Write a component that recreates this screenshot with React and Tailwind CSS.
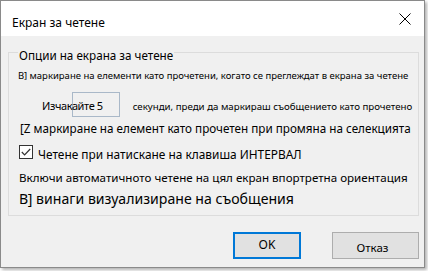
import React from 'react';

const font = { fontFamily: '"Noto Sans", "Open Sans", Arial, sans-serif' };

function CloseIcon() {
  return (
    <svg width="12" height="12" viewBox="0 0 12 12" className="block">
      <path d="M0.5 0.5 L11.5 11.5 M11.5 0.5 L0.5 11.5" stroke="#000" strokeWidth="1" fill="none" />
    </svg>
  );
}

function CheckBox() {
  return (
    <div className="w-[14px] h-[14px] border border-[#333] bg-white flex items-center justify-center shrink-0">
      <svg width="10" height="8" viewBox="0 0 10 8" className="block">
        <path d="M0.8 4 L3.6 6.8 L9.2 1" stroke="#333" strokeWidth="1.2" fill="none" />
      </svg>
    </div>
  );
}

export default function App() {
  return (
    <div className="w-[428px] h-[271px] bg-white overflow-hidden text-black" style={font}>
      {/* dialog window */}
      <div className="w-[425px] h-[268px] border border-[#8a8a8a] flex flex-col shadow-[2px_2px_3px_rgba(0,0,0,0.3)]">
        {/* title bar */}
        <div className="h-[35px] bg-white flex justify-between pl-[11px] pr-[13px] shrink-0">
          <span className="text-[12px] leading-[16px] mt-[14px] whitespace-nowrap">Екран за четене</span>
          <div className="mt-[12px]">
            <CloseIcon />
          </div>
        </div>

        {/* body */}
        <div className="flex-1 bg-[#f0f0f0] pt-[16px] pl-[7px]">
          <div className="relative w-[411px] h-[164px] border border-[#dcdcdc] flex flex-col">
            <span className="absolute left-[9px] top-[-5px] px-[1px] bg-[#f0f0f0] text-[11.7px] leading-[15px] whitespace-nowrap">
              Опции на екрана за четене
            </span>

            <div className="mt-[15px] pl-[9px] h-[16px] flex items-center text-[9.5px] leading-[16px] whitespace-nowrap">
              В] маркиране на елементи като прочетени, когато се преглеждат в екрана за четене
            </div>

            <div className="mt-[8px] h-[25px] flex items-start whitespace-nowrap">
              <span className="relative z-10 ml-[33px] mt-[6px] text-[11px] tracking-[-0.4px] leading-[16px]">Изчакайте 5</span>
              <div className="ml-[-31px] w-[48px] h-[25px] border border-[#a9b8c8] shrink-0" />
              <span className="ml-[13px] mt-[7px] text-[9.7px] leading-[16px]">
                секунди, преди да маркираш съобщението като прочетено
              </span>
            </div>

            <div className="mt-[2px] pl-[11px] h-[18px] flex items-center text-[11.7px] leading-[18px] whitespace-nowrap">
              [Z маркиране на елемент като прочетен при промяна на селекцията
            </div>

            <div className="mt-[6px] pl-[10px] h-[18px] flex items-center gap-[5px] whitespace-nowrap">
              <CheckBox />
              <span className="text-[11.9px] leading-[16px] mt-[4px]">Четене при натискане на клавиша ИНТЕРВАЛ</span>
            </div>

            <div className="mt-[9px] pl-[10px] h-[16px] flex items-center text-[11.6px] leading-[16px] whitespace-nowrap">
              Включи автоматичното четене на цял екран впортретна ориентация
            </div>

            <div className="mt-[4px] pl-[10px] h-[18px] flex items-center text-[14.1px] leading-[18px] whitespace-nowrap">
              В] винаги визуализиране на съобщения
            </div>
          </div>

          {/* buttons */}
          <div className="w-[411px] mt-[16px] flex justify-end gap-[31px]">
            <button className="w-[68px] h-[27px] bg-[#e1e1e1] border-2 border-[#0078d7] text-[12px] leading-none pb-[2px] flex items-center justify-center">
              OK
            </button>
            <button className="w-[87px] h-[27px] bg-[#e1e1e1] border border-[#adadad] text-[11.5px] leading-none pt-[5px] pr-[6px] flex items-center justify-center">
              Отказ
            </button>
          </div>
        </div>
      </div>
    </div>
  );
}
